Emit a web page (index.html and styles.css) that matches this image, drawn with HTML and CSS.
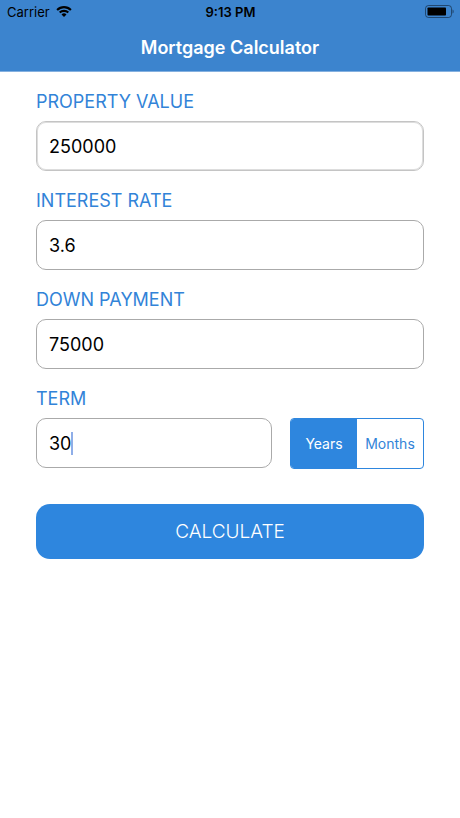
FILE: index.html
```html
<!DOCTYPE html>
<html lang="en">
<head>
<meta charset="utf-8">
<meta name="viewport" content="width=device-width, initial-scale=1">
<title>Mortgage Calculator</title>
<link rel="stylesheet" href="styles.css">
</head>
<body>
<header class="top">
  <div class="status">
    <div class="carrier">
      <span>Carrier</span>
      <svg class="wifi" viewBox="0 0 16 12" aria-hidden="true">
        <g fill="none" stroke="#000" stroke-width="2.1">
          <path d="M1.1 4a9.8 9.8 0 0 1 13.8 0"/>
          <path d="M3.7 6.600a6.1 6.1 0 0 1 8.6 0"/>
        </g>
        <path d="M8 11 5.500 8.500a3.500 3.500 0 0 1 5 0z"/>
      </svg>
    </div>
    <span class="time">9:13 PM</span>
    <svg class="battery" viewBox="0 0 29 14" aria-hidden="true">
      <rect x=".5" y=".5" width="26" height="12" rx="3" fill="none" stroke="#000" stroke-opacity=".45"/>
      <rect x="2.5" y="2.5" width="18.5" height="8" rx=".8"/>
      <path d="M27.500 4.500c1.600.5 1.600 3.500 0 4z" fill-opacity=".45"/>
    </svg>
  </div>
  <h1 class="title">Mortgage Calculator</h1>
</header>
<main>
  <form class="form">
    <div class="field">
      <label for="value">PROPERTY VALUE</label>
      <input class="box soft" id="value" type="text" inputmode="decimal" value="250000">
    </div>
    <div class="field">
      <label for="rate">INTEREST RATE</label>
      <input class="box" id="rate" type="text" inputmode="decimal" value="3.6">
    </div>
    <div class="field">
      <label for="down">DOWN PAYMENT</label>
      <input class="box" id="down" type="text" inputmode="decimal" value="75000">
    </div>
    <div class="field">
      <label for="term">TERM</label>
      <div class="term">
        <div class="active">
          <input class="box" id="term" type="text" inputmode="numeric" value="30">
          <span class="caret"></span>
        </div>
        <div class="segments" role="radiogroup" aria-label="Term unit">
          <label class="segment"><input type="radio" name="unit" value="years" checked><span>Years</span></label>
          <label class="segment"><input type="radio" name="unit" value="months"><span>Months</span></label>
        </div>
      </div>
    </div>
    <button class="calculate" type="button">CALCULATE</button>
  </form>
</main>
</body>
</html>
```
FILE: styles.css
```css
* {
  box-sizing: border-box;
}

body {
  margin: 0;
  background: #fff;
  color: #000;
  font-family: Inter, "Liberation Sans", sans-serif;
}

.top {
  background: #3c84ce;
  border-bottom: 1px solid #84b0df;
}

.status {
  display: grid;
  grid-template-columns: 1fr auto 1fr;
  align-items: center;
  height: 24px;
  padding: 0 6px 0 7px;
  font-size: 13px;
}

.carrier {
  display: flex;
  align-items: center;
  gap: 6px;
}

.wifi {
  width: 16px;
  height: 12px;
}

.time {
  font-weight: 600;
}

.battery {
  justify-self: end;
  width: 29px;
  height: 14px;
}

.title {
  margin: 0;
  color: #fff;
  font-size: 18px;
  font-weight: 600;
  line-height: 47px;
  text-align: center;
}

.form {
  display: flex;
  flex-direction: column;
  gap: 18px;
  padding: 18px 36px;
}

.field {
  display: flex;
  flex-direction: column;
  gap: 7px;
  color: #3283d8;
  font-size: 18px;
  line-height: 24px;
}

.box {
  display: block;
  width: 100%;
  height: 50px;
  padding: 0 12px;
  border: 1px solid #aaa;
  border-radius: 10px;
  outline: 0;
  background: #fff;
  color: #000;
  font: inherit;
}

.soft {
  border-color: #c4c4c4;
  box-shadow: inset 0 0 0 1px #ddd;
}

.term {
  display: flex;
  gap: 18px;
}

.active {
  position: relative;
  flex: 1;
}

.caret {
  position: absolute;
  top: 14px;
  left: 35px;
  width: 2px;
  height: 23px;
  background: #8faee8;
}

.segments {
  display: flex;
  width: 134px;
  height: 51px;
  overflow: hidden;
  border: 1px solid #2e86de;
  border-radius: 4px;
  font-size: 14px;
}

.segment {
  position: relative;
  display: flex;
  flex: 1;
}

.segment input {
  position: absolute;
  inset: 0;
  margin: 0;
  opacity: 0;
}

.segment span {
  display: flex;
  flex: 1;
  align-items: center;
  justify-content: center;
}

.segment input:checked + span {
  background: #2e86de;
  color: #fff;
}

.calculate {
  height: 55px;
  margin-top: 17px;
  border: 0;
  border-radius: 14px;
  background: #2e86de;
  color: #fff;
  font-family: inherit;
  font-size: 19px;
  font-weight: 300;
}
```
